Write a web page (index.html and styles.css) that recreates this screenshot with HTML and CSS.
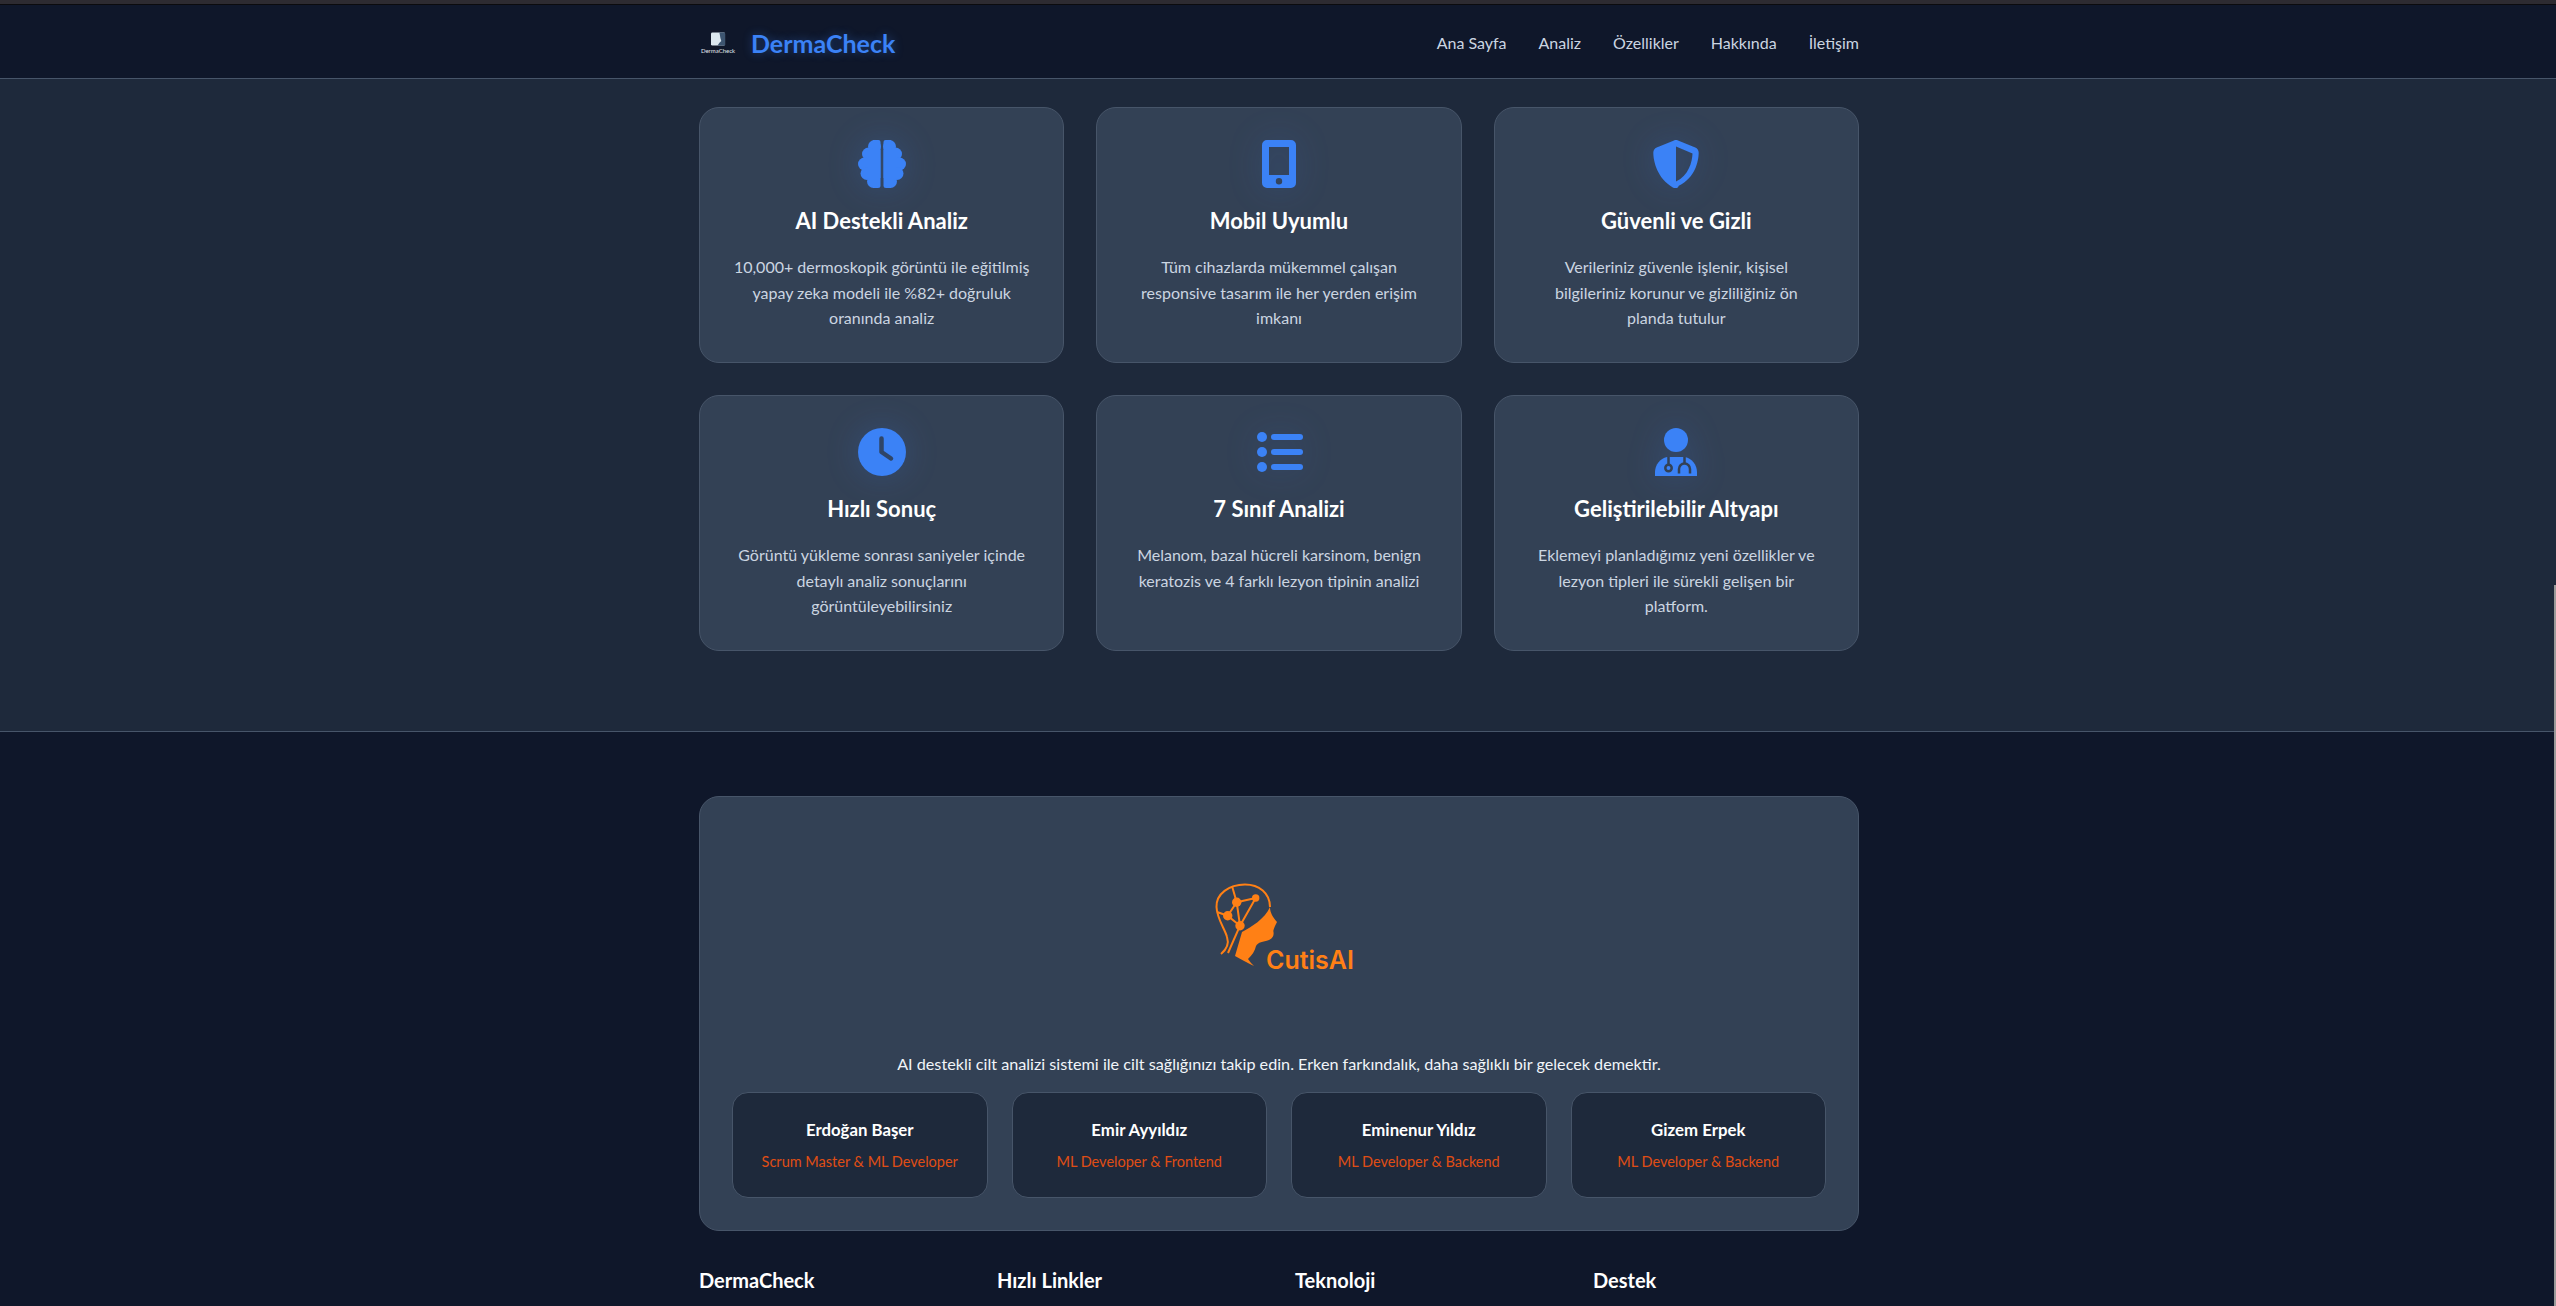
FILE: index.html
```html
<!DOCTYPE html>
<html lang="tr">
<head>
    <meta charset="UTF-8">
    <meta name="viewport" content="width=device-width, initial-scale=1.0">
    <title>DermaCheck</title>
    <link rel="stylesheet" href="styles.css">
</head>
<body>

    <div class="window-strip"></div>

    <nav class="navbar">
        <div class="container nav-inner">
            <a class="brand" href="#">
                <span class="brand-logo">
                    <svg class="brand-mark" viewBox="0 0 16 14" aria-hidden="true">
                        <rect x="0" y="0" width="15" height="14" rx="1.5" fill="#dbe7f0"/>
                        <path d="M9 0h5a1 1 0 0 1 1 1v12a1 1 0 0 1-1 1H7l2-3 2-2-1-3z" fill="#3d5570"/>
                    </svg>
                    <span class="brand-logo-text">DermaCheck</span>
                </span>
                <span class="brand-name">DermaCheck</span>
            </a>
            <ul class="nav-links">
                <li><a href="#">Ana Sayfa</a></li>
                <li><a href="#">Analiz</a></li>
                <li><a href="#">Özellikler</a></li>
                <li><a href="#">Hakkında</a></li>
                <li><a href="#">İletişim</a></li>
            </ul>
        </div>
    </nav>

    <section class="features">
        <div class="container feature-grid">
            <div class="feature-card">
                <svg class="feature-icon" viewBox="0 0 48 48" aria-hidden="true">
                    <g fill="#3b82f6">
                        <g>
                            <circle cx="16.500" cy="6.500" r="6.500"/>
                            <circle cx="10.500" cy="14" r="6.500"/>
                            <circle cx="6.500" cy="24" r="6.500"/>
                            <circle cx="9" cy="33.500" r="6.500"/>
                            <circle cx="15.500" cy="41.500" r="6.500"/>
                            <path d="M15 0h5.500a2 2 0 0 1 2 2v43.500a2.500 2.500 0 0 1-2.500 2.500h-5z"/>
                            <rect x="10" y="10" width="12.500" height="28"/>
                        </g>
                        <g transform="matrix(-1 0 0 1 48 0)">
                            <circle cx="16.500" cy="6.500" r="6.500"/>
                            <circle cx="10.500" cy="14" r="6.500"/>
                            <circle cx="6.500" cy="24" r="6.500"/>
                            <circle cx="9" cy="33.500" r="6.500"/>
                            <circle cx="15.500" cy="41.500" r="6.500"/>
                            <path d="M15 0h5.500a2 2 0 0 1 2 2v43.500a2.500 2.500 0 0 1-2.500 2.500h-5z"/>
                            <rect x="10" y="10" width="12.500" height="28"/>
                        </g>
                    </g>
                </svg>
                <h3>AI Destekli Analiz</h3>
                <p>10,000+ dermoskopik görüntü ile eğitilmiş yapay zeka modeli ile %82+ doğruluk oranında analiz</p>
            </div>
            <div class="feature-card">
                <svg class="feature-icon" viewBox="0 0 48 48" aria-hidden="true">
                    <path fill-rule="evenodd" d="M12 0h24a5 5 0 0 1 5 5v38a5 5 0 0 1-5 5H12a5 5 0 0 1-5-5V5a5 5 0 0 1 5-5zM14 7v28h20V7zM24 38a3.200 3.200 0 1 0 0 6.400 3.200 3.200 0 0 0 0-6.400z" fill="#3b82f6"/>
                </svg>
                <h3>Mobil Uyumlu</h3>
                <p>Tüm cihazlarda mükemmel çalışan responsive tasarım ile her yerden erişim imkanı</p>
            </div>
            <div class="feature-card">
                <svg class="feature-icon" viewBox="0 0 48 48" aria-hidden="true">
                    <path fill-rule="evenodd" d="M24 0c.7 0 1.400.15 2 .45L43.300 7.600c2 .9 3.400 2.800 3.400 5.100-.1 8.900-3.800 25.300-19.900 33C25.900 47.800 25 48 24 48s-1.900-.2-2.800-.3C5.100 38 1.400 21.600 1.300 12.700c0-2.300 1.400-4.200 3.400-5.100L22 .45C22.600.15 23.300 0 24 0zm0 6.400v35.200c12.800-6.300 16.200-19.800 16.500-28.100z" fill="#3b82f6"/>
                </svg>
                <h3>Güvenli ve Gizli</h3>
                <p>Verileriniz güvenle işlenir, kişisel<br>bilgileriniz korunur ve gizliliğiniz ön<br>planda tutulur</p>
            </div>
            <div class="feature-card">
                <svg class="feature-icon" viewBox="0 0 48 48" aria-hidden="true">
                    <circle cx="24" cy="24" r="24" fill="#3b82f6"/>
                    <path d="M23.500 10.500V24l9.500 6.500" fill="none" stroke="#2f4567" stroke-width="4.500" stroke-linecap="round" stroke-linejoin="round"/>
                </svg>
                <h3>Hızlı Sonuç</h3>
                <p>Görüntü yükleme sonrası saniyeler içinde detaylı analiz sonuçlarını görüntüleyebilirsiniz</p>
            </div>
            <div class="feature-card">
                <svg class="feature-icon" viewBox="0 0 48 48" aria-hidden="true">
                    <g fill="#3b82f6">
                        <circle cx="7" cy="9" r="5"/>
                        <circle cx="7" cy="24" r="5"/>
                        <circle cx="7" cy="39" r="5"/>
                        <rect x="16" y="6" width="32" height="6" rx="3"/>
                        <rect x="16" y="21" width="32" height="6" rx="3"/>
                        <rect x="16" y="36" width="32" height="6" rx="3"/>
                    </g>
                </svg>
                <h3>7 Sınıf Analizi</h3>
                <p>Melanom, bazal hücreli karsinom, benign keratozis ve 4 farklı lezyon tipinin analizi</p>
            </div>
            <div class="feature-card">
                <svg class="feature-icon" viewBox="0 0 48 48" aria-hidden="true">
                    <circle cx="24" cy="12" r="12" fill="#3b82f6"/>
                    <path d="M15 29h18c7 1.500 12 8 12 15v4H3v-4c0-7 5-13.500 12-15z" fill="#3b82f6"/>
                    <g fill="none" stroke="#334155" stroke-width="2.500">
                        <path d="M16.500 29v8"/>
                        <circle cx="16.500" cy="40" r="3.200"/>
                        <path d="M32.500 29v6"/>
                        <path d="M27 45.500V41a5.500 5.500 0 0 1 11 0v4.500"/>
                    </g>
                </svg>
                <h3>Geliştirilebilir Altyapı</h3>
                <p>Eklemeyi planladığımız yeni özellikler ve lezyon tipleri ile sürekli gelişen bir platform.</p>
            </div>
        </div>
    </section>

    <footer class="site-footer">
        <div class="container">
            <div class="about-card">
                <div class="cutis-logo">
                    <svg class="cutis-mark" viewBox="-16 0 160 92" role="img" aria-label="CutisAI">
                        <g fill="none" stroke="#ff8015" stroke-width="2">
                            <path d="M6 71C12 66 14 60 12 54C10 46 2 36 1.500 24C1 11 14 1.500 30 1.500C44 1.500 55 10 55 24"/>
                            <path d="M25 42.700L13 70"/>
                            <path d="M21.700 19.300L40.700 15L25 42.700L12.700 32.700L21.700 19.300L25 42.700"/>
                            <path d="M21.700 19.300L17 3M12.700 32.700L2 29"/>
                        </g>
                        <g fill="#ff8015">
                            <circle cx="21.700" cy="19.300" r="4.700"/>
                            <circle cx="40.700" cy="15" r="3.700"/>
                            <circle cx="12.700" cy="32.700" r="4.700"/>
                            <circle cx="25" cy="42.700" r="4.700"/>
                            <path d="M55 24C55 30 58 34 62 39L60 43C59 46 58 47 58.500 49C59 52 58 55 54 57C48 59 43 59 41 63C40 68 37 72 33 76C35 79 37 81 39 83C32 80 26 76 20 73L27 49C36 44 50 36 55 24Z"/>
                        </g>
                        <text class="cutis-name" x="51" y="86">CutisAI</text>
                    </svg>
                </div>
                <p class="about-text">AI destekli cilt analizi sistemi ile cilt sağlığınızı takip edin. Erken farkındalık, daha sağlıklı bir gelecek demektir.</p>
                <div class="team-grid">
                    <div class="team-card">
                        <h4>Erdoğan Başer</h4>
                        <p>Scrum Master &amp; ML Developer</p>
                    </div>
                    <div class="team-card">
                        <h4>Emir Ayyıldız</h4>
                        <p>ML Developer &amp; Frontend</p>
                    </div>
                    <div class="team-card">
                        <h4>Eminenur Yıldız</h4>
                        <p>ML Developer &amp; Backend</p>
                    </div>
                    <div class="team-card">
                        <h4>Gizem Erpek</h4>
                        <p>ML Developer &amp; Backend</p>
                    </div>
                </div>
            </div>
            <div class="footer-grid">
                <h3>DermaCheck</h3>
                <h3>Hızlı Linkler</h3>
                <h3>Teknoloji</h3>
                <h3>Destek</h3>
            </div>
        </div>
    </footer>

    <div class="scroll-thumb"></div>

</body>
</html>
```

FILE: styles.css
```css
* {
    box-sizing: border-box;
}

html, body {
    height: 1306px;
    overflow: hidden;
}

body {
    font-family: 'Lato', 'Noto Sans', sans-serif;
    background-color: #0f172a;
    color: #cbd5e1;
    margin: 0;
    padding: 0;
}

.container {
    width: 1160px;
    margin-left: calc(50% - 579px);
}

.window-strip {
    height: 5px;
    background-color: #2d2b31;
    border-bottom: 1px solid #0b0b0e;
}

/* navbar */
.navbar {
    height: 74px;
    background-color: #0f172a;
    border-bottom: 1px solid #475569;
}

.nav-inner {
    height: 100%;
    padding-top: 2px;
    display: flex;
    align-items: center;
    justify-content: space-between;
}

.brand {
    display: flex;
    align-items: center;
    gap: 14px;
    text-decoration: none;
}

.brand-logo {
    width: 38px;
    display: flex;
    flex-direction: column;
    align-items: center;
    gap: 1px;
}

.brand-mark {
    width: 15px;
    height: 14px;
}

.brand-logo-text {
    font-size: 6px;
    color: #e2e8f0;
    white-space: nowrap;
}

.brand-name {
    font-size: 25px;
    font-weight: 700;
    color: #3b82f6;
    text-shadow: 0 0 10px rgba(59, 130, 246, 0.4);
}

.nav-links {
    display: flex;
    gap: 32px;
    list-style: none;
    margin: 0;
    padding: 0;
}

.nav-links a {
    color: #cbd5e1;
    font-size: 16px;
    text-decoration: none;
}

/* features */
.features {
    background-color: #1e293b;
    padding: 28px 0 80px;
    border-bottom: 1px solid #475569;
}

.feature-grid {
    display: grid;
    grid-template-columns: repeat(3, 1fr);
    gap: 32px;
}

.feature-card {
    height: 256px;
    padding: 32px;
    background-color: #334155;
    border: 1px solid #475569;
    border-radius: 20px;
    text-align: center;
}

.feature-icon {
    display: block;
    width: 48px;
    height: 48px;
    margin: 0 auto 16px;
    filter: drop-shadow(0 0 16px rgba(59, 130, 246, 0.2));
}

.feature-card h3 {
    font-size: 22px;
    font-weight: 700;
    line-height: 34px;
    color: #fff;
    margin: 0 0 16px;
}

.feature-card p {
    font-size: 16px;
    line-height: 25.6px;
    margin: 0;
}

/* footer */
.site-footer {
    padding-top: 64px;
}

.about-card {
    padding: 32px;
    background-color: #334155;
    border: 1px solid #475569;
    border-radius: 20px;
    text-align: center;
}

.cutis-logo {
    height: 200px;
    padding-top: 54px;
    margin-bottom: 23px;
}

.cutis-mark {
    display: block;
    width: 160px;
    height: 92px;
    margin: 0 auto;
}

.cutis-name {
    font-family: 'Inter', sans-serif;
    font-size: 25px;
    font-weight: 600;
    fill: #ff8015;
}

.about-text {
    font-size: 16.2px;
    line-height: 24px;
    color: #f1f5f9;
    margin: 0 0 16px;
}

.team-grid {
    display: grid;
    grid-template-columns: repeat(4, 1fr);
    gap: 24px;
}

.team-card {
    height: 106px;
    padding: 24px;
    background-color: #1e293b;
    border: 1px solid #475569;
    border-radius: 16px;
}

.team-card h4 {
    font-size: 16.800px;
    font-weight: 700;
    line-height: 26px;
    color: #fff;
    margin: 0 0 6px;
}

.team-card p {
    font-size: 14.500px;
    line-height: 26px;
    color: #e04e14;
    margin: 0;
}

.footer-grid {
    display: grid;
    grid-template-columns: repeat(4, 1fr);
    gap: 32px;
    margin-top: 37px;
}

.footer-grid h3 {
    font-size: 20px;
    font-weight: 700;
    color: #fff;
    margin: 0;
}

.scroll-thumb {
    position: absolute;
    right: 0;
    top: 585px;
    bottom: 0;
    width: 2px;
    background-color: #9a9a9a;
}
```
